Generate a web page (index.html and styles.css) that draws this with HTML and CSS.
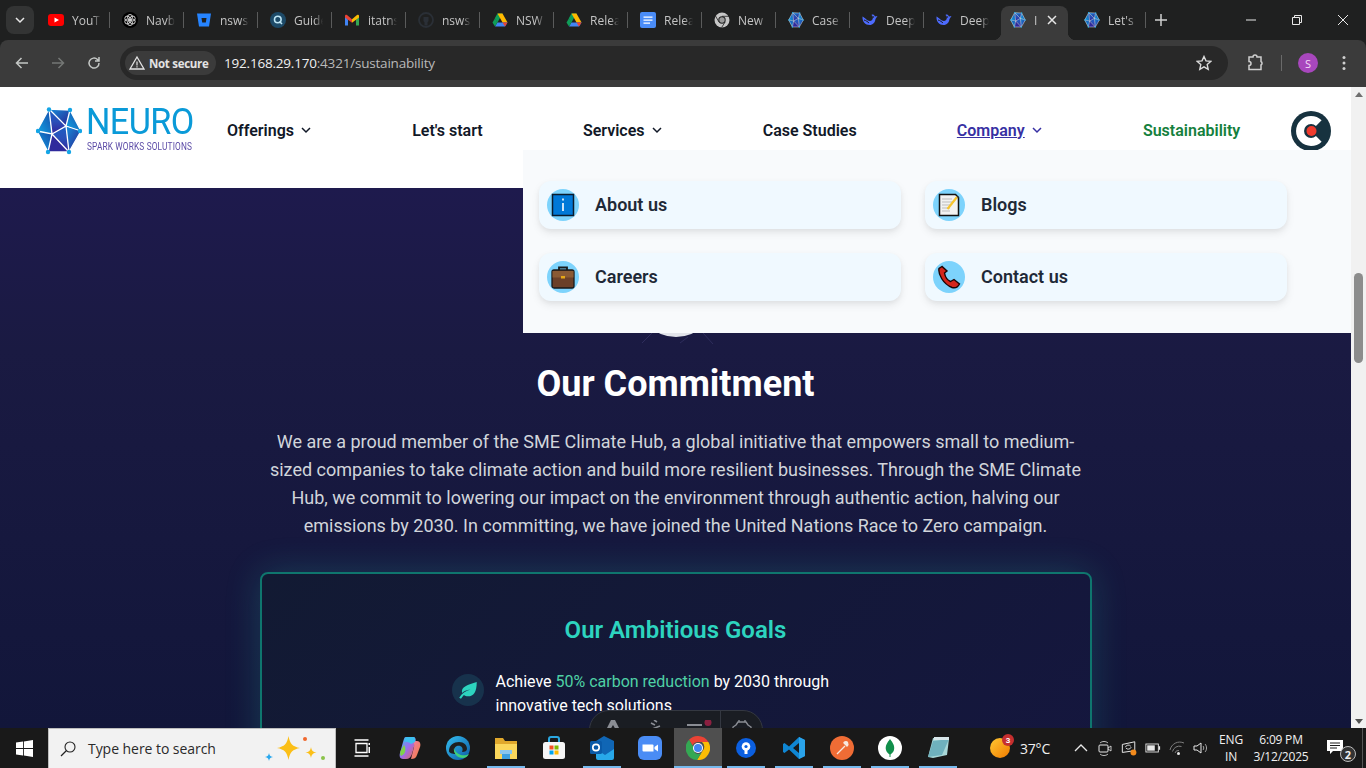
FILE: index.html
```html
<!DOCTYPE html>
<html lang="en">
<head>
<meta charset="utf-8">
<title>Sustainability</title>
<link rel="stylesheet" href="styles.css">
</head>
<body>
<svg class="defs" aria-hidden="true">
  <defs>
    <linearGradient id="ng" x1="0" y1="0" x2="0" y2="1"><stop offset="0" stop-color="#1c5fc4"/><stop offset=".5" stop-color="#2a4fb8"/><stop offset="1" stop-color="#33239a"/></linearGradient>
    <linearGradient id="ng2" x1="1" y1="0" x2="0" y2="1"><stop offset="0" stop-color="#1747a8"/><stop offset="1" stop-color="#10a6e6"/></linearGradient>
    <linearGradient id="ng3" x1="0" y1="0" x2="1" y2="1"><stop offset="0" stop-color="#1590dc"/><stop offset="1" stop-color="#2b1f8f"/></linearGradient>
    <linearGradient id="cop" x1="0" y1="0" x2="1" y2="1"><stop offset="0" stop-color="#37c3f0"/><stop offset=".5" stop-color="#9c6cf0"/><stop offset="1" stop-color="#f0663c"/></linearGradient>
    <linearGradient id="cop2" x1="0" y1="0" x2="1" y2="1"><stop offset="0" stop-color="#f07ab0"/><stop offset="1" stop-color="#f2803a"/></linearGradient>
    <linearGradient id="edge" x1="0" y1="0" x2="1" y2="1"><stop offset="0" stop-color="#35c1f1"/><stop offset="1" stop-color="#0c59a4"/></linearGradient>
    <symbol id="neuro" viewBox="0 0 46 48">
      <path fill="url(#ng2)" d="M13 2 16 27 1 24Z"/>
      <path fill="url(#ng3)" d="M13 2 34 3 30 19Z"/>
      <path fill="url(#ng)" d="M13 2 30 19 16 27Z"/>
      <path fill="url(#ng2)" d="M34 3 45 24 30 19Z"/>
      <path fill="url(#ng3)" d="M30 19 45 24 33 45Z"/>
      <path fill="url(#ng)" d="M16 27 30 19 33 45Z"/>
      <path fill="#2f2a9c" d="M16 27 33 45H12Z"/>
      <path fill="url(#ng2)" d="M1 24 16 27 12 45Z"/>
      <path fill="none" stroke="#fff" stroke-width="1.300" d="M13 2 34 3 45 24 33 45 12 45 1 24ZM13 2 16 27 1 24M16 27 12 45M16 27 33 45M16 27 30 19 13 2M30 19 34 3M30 19 45 24M30 19 33 45"/>
      <g fill="#14a5e6"><circle cx="13" cy="2.500" r="2.200"/><circle cx="34" cy="3" r="2.200"/><circle cx="44" cy="24" r="2.200"/><circle cx="33" cy="45" r="2.200"/><circle cx="12" cy="45" r="2.200"/><circle cx="2" cy="24" r="2.200"/></g>
    </symbol>
    <symbol id="fav-yt" viewBox="0 0 16 16"><rect y="2" width="16" height="12" rx="3" fill="#f00"/><path d="M6.500 5.500 11 8l-4.500 2.500Z" fill="#fff"/></symbol>
    <symbol id="fav-ai" viewBox="0 0 16 16"><circle cx="8" cy="8" r="8" fill="#000"/><g fill="none" stroke="#cfcfcf" stroke-width="1"><circle cx="8" cy="5" r="2.500"/><circle cx="8" cy="11" r="2.500"/><circle cx="5.300" cy="6.500" r="2.500"/><circle cx="10.700" cy="6.500" r="2.500"/><circle cx="5.300" cy="9.500" r="2.500"/><circle cx="10.700" cy="9.500" r="2.500"/></g></symbol>
    <symbol id="fav-bb" viewBox="0 0 16 16"><path d="M1 1.500h14l-2 13H3Z" fill="#2684ff"/><path d="M5.500 6h5l-.7 4.500H6.200Z" fill="#1f2020"/></symbol>
    <symbol id="fav-q" viewBox="0 0 16 16"><circle cx="8" cy="8" r="8" fill="#1d4a68"/><circle cx="7.800" cy="7.500" r="3.300" fill="none" stroke="#bfe6f5" stroke-width="1.600"/><path d="m9.500 9.500 2.500 2.500" stroke="#bfe6f5" stroke-width="1.600"/></symbol>
    <symbol id="fav-gm" viewBox="0 0 16 16"><path d="M1 4v9.500h3V7.500Z" fill="#4285f4"/><path d="M15 4v9.500h-3V7.500Z" fill="#34a853"/><path d="M1 3.500v2l7 5.300V7.300L3 3C2 2.300 1 2.700 1 3.500Z" fill="#ea4335"/><path d="M15 3.500v2l-7 5.300V7.300L13 3c1-.7 2-.3 2 .5Z" fill="#fbbc04"/></symbol>
    <symbol id="fav-gh" viewBox="0 0 16 16"><circle cx="8" cy="8" r="7" fill="none" stroke="#2a2f36" stroke-width="1.800"/><path d="M5.500 5h5v4l-1 1.500v3h-3v-3l-1-1.500Z" fill="#2a2f36"/></symbol>
    <symbol id="fav-dr" viewBox="0 0 16 16"><path d="M5.500 1.500h5L5.300 10.700 2.800 6.200Z" fill="#0f9d58"/><path d="M10.500 1.500 15.500 10.500h-5L5.500 1.500Z" fill="#ffba00"/><path d="M3 14.500 5.400 10.500h10.100L13 14.500Z" fill="#4285f4"/><path d="M.5 10.500 3 6.200l2.400 4.300L3 14.500Z" fill="#0f9d58"/><path d="M15.500 10.500 13 14.500l-2.500-4Z" fill="#ea4335"/></symbol>
    <symbol id="fav-doc" viewBox="0 0 16 16"><rect width="16" height="16" rx="2" fill="#4a8cf7"/><path d="M3.500 4.500h9v1.300h-9zM3.500 7.500h9v1.300h-9zM3.500 10.500h6.500v1.300H3.500z" fill="#fff"/></symbol>
    <symbol id="fav-chg" viewBox="0 0 16 16"><circle cx="8" cy="8" r="7.500" fill="#c7c7c7"/><circle cx="8" cy="8" r="3.700" fill="#1f2020"/><circle cx="8" cy="8" r="2.700" fill="#9a9a9a"/><path d="M8 4.300h7M5 10 1.500 4M11.200 9.900 7.600 15.500" stroke="#1f2020" stroke-width=".8"/></symbol>
    <symbol id="fav-ds" viewBox="0 0 16 16"><path d="M.5 4.500c-.5 5 3 8.500 7 8.500 3.500 0 5.500-2.500 6-6l2-3-2.500.5C12 2.500 10.500 2 9.500 3c2.500 1.500 1.500 6-1.500 6-3 0-5-3.500-7.500-4.500Z" fill="#4d6bfe"/><path d="M2 8c2 .5 4 2 5 3" stroke="#1f2020" fill="none"/><circle cx="11.500" cy="5" r=".7" fill="#1f2020"/></symbol>
    <symbol id="i-leaf" viewBox="0 0 16 16"><path d="M15 1.500c0 8-2.500 11.500-7 11.500-1.400 0-2.500-.4-3.300-1C3.700 13 3 14 2.400 15L1 14.200C3 10.500 6 8.500 10 7.500 7 7.800 4.500 9 3.300 10.300 2 5.500 8 3.500 15 1.500Z" fill="#2dd4bf"/></symbol>
    <symbol id="chev" viewBox="0 0 12 12"><path d="m2 4 4 4 4-4" fill="none" stroke="currentColor" stroke-width="1.500"/></symbol>
  </defs>
</svg>

<div class="screen">
  <header class="tabstrip">
    <button class="tabmenu"><svg class="ic12"><use href="#chev"/></svg></button>
    <div class="tabs">
      <div class="tab"><svg class="fav"><use href="#fav-yt"/></svg><span class="tabname">YouTube</span></div>
      <div class="tab"><svg class="fav"><use href="#fav-ai"/></svg><span class="tabname">Navbar</span></div>
      <div class="tab"><svg class="fav"><use href="#fav-bb"/></svg><span class="tabname">nsws-</span></div>
      <div class="tab"><svg class="fav"><use href="#fav-q"/></svg><span class="tabname">Guide</span></div>
      <div class="tab"><svg class="fav"><use href="#fav-gm"/></svg><span class="tabname">itatns</span></div>
      <div class="tab"><svg class="fav"><use href="#fav-gh"/></svg><span class="tabname">nsws</span></div>
      <div class="tab"><svg class="fav"><use href="#fav-dr"/></svg><span class="tabname">NSW</span></div>
      <div class="tab"><svg class="fav"><use href="#fav-dr"/></svg><span class="tabname">Release</span></div>
      <div class="tab"><svg class="fav"><use href="#fav-doc"/></svg><span class="tabname">Release</span></div>
      <div class="tab"><svg class="fav"><use href="#fav-chg"/></svg><span class="tabname">New</span></div>
      <div class="tab"><svg class="fav"><use href="#neuro"/></svg><span class="tabname">Case</span></div>
      <div class="tab"><svg class="fav"><use href="#fav-ds"/></svg><span class="tabname">Deep</span></div>
      <div class="tab tab-before-active"><svg class="fav"><use href="#fav-ds"/></svg><span class="tabname">Deep</span></div>
      <div class="tab tab-active"><svg class="fav"><use href="#neuro"/></svg><span class="tabname tabname-active">I</span>
        <svg class="tabclose" viewBox="0 0 10 10"><path d="m1 1 8 8M9 1 1 9" stroke="#e6e6e6" stroke-width="1.500"/></svg></div>
      <div class="tab"><svg class="fav"><use href="#neuro"/></svg><span class="tabname">Let's</span></div>
    </div>
    <svg class="newtab" viewBox="0 0 12 12"><path d="M6 0v12M0 6h12" stroke="#d0d0d0" stroke-width="1.500"/></svg>
    <div class="winctl">
      <svg class="winbtn" viewBox="0 0 12 12"><path d="M1 6h10" stroke="#e8e8e8"/></svg>
      <svg class="winbtn" viewBox="0 0 12 12"><path d="M1.500 3.500h7v7h-7zM3.500 3.500v-2h7v7h-2" fill="none" stroke="#e8e8e8"/></svg>
      <svg class="winbtn" viewBox="0 0 12 12"><path d="m1 1 10 10M11 1 1 11" stroke="#e8e8e8"/></svg>
    </div>
  </header>

  <nav class="toolbar">
    <svg class="tool" viewBox="0 0 16 16"><path d="M14 8H2.500M7.500 3l-5 5 5 5" fill="none" stroke="#c4c7c5" stroke-width="1.500"/></svg>
    <svg class="tool" viewBox="0 0 16 16"><path d="M2 8h11.500M8.500 3l5 5-5 5" fill="none" stroke="#747775" stroke-width="1.500"/></svg>
    <svg class="tool" viewBox="0 0 16 16"><path d="M13 8a5 5 0 1 1-1.500-3.500L13 6M13 2v4H9" fill="none" stroke="#c4c7c5" stroke-width="1.500"/></svg>
    <div class="omnibox">
      <div class="chip">
        <svg class="warn" viewBox="0 0 16 16"><path d="M8 2 15 14H1Z" fill="none" stroke="#e3e3e3" stroke-width="1.300"/><path d="M8 6.500v4M8 11.300v1.200" stroke="#e3e3e3" stroke-width="1.200"/></svg>
        <span>Not secure</span>
      </div>
      <span class="url"><span class="url-host">192.168.29.170</span>:4321/sustainability</span>
      <svg class="star" viewBox="0 0 16 16"><path d="m8 1.500 2 4.400 4.800.5-3.600 3.200 1 4.700L8 11.900l-4.200 2.400 1-4.700L1.200 6.400 6 5.900Z" fill="none" stroke="#dcdcdc" stroke-width="1.400"/></svg>
    </div>
    <svg class="ext" viewBox="0 0 18 18"><path d="M3 3h4a2 2 0 0 1 4 0h4v4.500a2 2 0 0 1 0 3.500v4.500H3v-4a2 2 0 0 0 0-4Z" fill="none" stroke="#d0d0d0" stroke-width="1.500"/></svg>
    <span class="tool-sep"></span>
    <span class="avatar">S</span>
    <svg class="kebab" viewBox="0 0 4 16"><circle cx="2" cy="2.500" r="1.500" fill="#d0d0d0"/><circle cx="2" cy="8" r="1.500" fill="#d0d0d0"/><circle cx="2" cy="13.500" r="1.500" fill="#d0d0d0"/></svg>
  </nav>

  <div class="viewport">
    <div class="page">
      <div class="site-header">
        <div class="logo">
          <svg class="logo-mark"><use href="#neuro"/></svg>
          <div class="logo-text">
            <span class="logo-name">NEURO</span>
            <span class="logo-sub">SPARK WORKS SOLUTIONS</span>
          </div>
        </div>
        <div class="site-nav">
          <a class="nav-link">Offerings <svg class="ic12"><use href="#chev"/></svg></a>
          <a class="nav-link">Let's start</a>
          <a class="nav-link">Services <svg class="ic12"><use href="#chev"/></svg></a>
          <a class="nav-link">Case Studies</a>
          <a class="nav-link nav-company"><span class="underlined">Company</span> <svg class="ic12"><use href="#chev"/></svg></a>
          <a class="nav-link nav-green">Sustainability</a>
        </div>
        <svg class="brand-c" viewBox="0 0 40 40">
          <circle cx="20" cy="20" r="20" fill="#17323f"/>
          <path d="M27.800 12.200A11 11 0 1 0 27.800 27.800" fill="none" stroke="#fff" stroke-width="8"/>
          <circle cx="20.500" cy="20" r="5" fill="#ef3b2d"/>
        </svg>
      </div>

      <main class="hero">
        <div class="hero-badge">
          <svg class="badge-rays" viewBox="0 0 120 16"><path d="M26 14 36 4M64 14l8-6M87 4l10 11" stroke="#2e2d5c" fill="none"/></svg>
        </div>
        <h1 class="hero-title">Our Commitment</h1>
        <p class="hero-copy">We are a proud member of the SME Climate Hub, a global initiative that empowers small to medium-sized companies to take climate action and build more resilient businesses. Through the SME Climate Hub, we commit to lowering our impact on the environment through authentic action, halving our emissions by 2030. In committing, we have joined the United Nations Race to Zero campaign.</p>
        <section class="goals">
          <h2 class="goals-title">Our Ambitious Goals</h2>
          <div class="goal">
            <span class="goal-icon"><svg class="leaf"><use href="#i-leaf"/></svg></span>
            <p class="goal-text">Achieve <span class="goal-hl">50% carbon reduction</span> by 2030 through innovative tech solutions</p>
          </div>
        </section>
      </main>

      <div class="dropdown">
        <a class="menu-card">
          <span class="menu-icon"><svg class="emoji" viewBox="0 0 24 24"><rect x="1.500" y="1.500" width="21" height="21" fill="#0078d7" stroke="#0b1b2b" stroke-width="1.500"/><path d="M12 5.500v2M12 10v8" stroke="#fff" stroke-width="1.600"/></svg></span>
          <span class="menu-label">About us</span>
        </a>
        <a class="menu-card">
          <span class="menu-icon"><svg class="emoji" viewBox="0 0 24 24"><path d="M8 5V2.500h8V5" fill="none" stroke="#1a1a1a" stroke-width="1.800"/><rect x="1" y="5" width="22" height="18" rx="2" fill="#6b4028" stroke="#1a1a1a" stroke-width="1.300"/><path d="M1.500 6h21v6.500h-21z" fill="#8a5a34"/><rect x="10" y="11" width="4" height="2.500" fill="#e6a817"/></svg></span>
          <span class="menu-label">Careers</span>
        </a>
        <a class="menu-card">
          <span class="menu-icon"><svg class="emoji" viewBox="0 0 24 24"><path d="M2.500 1.500h16l3 3v18h-19Z" fill="#f2f2f2" stroke="#111" stroke-width="1.500"/><path d="M5 6h10M5 9h12M5 12h8M5 15h8M5 18h8" stroke="#bdbdbd"/><path d="m20 4-9.500 12" stroke="#f7c52e" stroke-width="2.200"/><path d="m20 3 2 1-1 2Z" fill="#333"/></svg></span>
          <span class="menu-label">Blogs</span>
        </a>
        <a class="menu-card">
          <span class="menu-icon"><svg class="emoji" viewBox="0 0 24 24"><path d="M5 1.500 2 3.500C1 9 6 19 15 22.500c3 .8 6-.5 7.500-3.500L17 14.500l-3.500 2C10 15 8 11 7.500 8L10 6Z" fill="#d3261c" stroke="#1a0505" stroke-width="1.400"/></svg></span>
          <span class="menu-label">Contact us</span>
        </a>
      </div>

      <div class="devbar">
        <svg class="dev-a" viewBox="0 0 14 18"><path d="M0 10 5 0h4l5 10h-4L7 5 4 10Z" fill="#8a8d94"/></svg>
        <svg class="dev-b" viewBox="0 0 16 12"><path d="M8 0l3 2M5 3l4 2M1 11 14 6" stroke="#8a8d94" stroke-width="1.600" fill="none"/></svg>
        <svg class="dev-c" viewBox="0 0 26 12"><path d="M0 5h15" stroke="#8a8d94" stroke-width="2"/><circle cx="21" cy="2.500" r="3.500" fill="#8b2040"/></svg>
        <span class="dev-sep"></span>
        <svg class="dev-d" viewBox="0 0 20 12"><path d="M1 11V7l3-2 2-3h8l2 3 3 2v4M7 2V0M13 2V0" stroke="#8a8d94" stroke-width="1.400" fill="none"/></svg>
      </div>
    </div>

    <aside class="scrollbar">
      <span class="scroll-up"></span>
      <span class="scroll-thumb"></span>
      <span class="scroll-down"></span>
    </aside>
  </div>

  <footer class="taskbar">
    <div class="start">
      <svg class="winlogo" viewBox="0 0 16 16"><path d="M0 2.300 6.600 1.400V7.600H0ZM7.400 1.300 16 0V7.600H7.400ZM0 8.400H6.600V14.600L0 13.700ZM7.400 8.400H16V16L7.400 14.700Z" fill="#fff"/></svg>
    </div>
    <div class="search">
      <svg class="search-ic" viewBox="0 0 16 16"><circle cx="10" cy="6" r="5" fill="none" stroke="#222" stroke-width="1.100"/><path d="M6.500 9.500 1 15" stroke="#222" stroke-width="1.200"/></svg>
      <span class="search-text">Type here to search</span>
      <svg class="sparkles" viewBox="0 0 64 28"><path d="M25.500 1c1.500 8 4 10.500 11.500 12-7.500 1.500-10 4-11.500 12-1.500-8-4-10.500-11.500-12 7.500-1.500 10-4 11.500-12Z" fill="#fbbf17"/><path d="M48 12c.6 3.500 2 5 5.500 5.500-3.500.5-4.900 2-5.500 5.500-.6-3.500-2-5-5.500-5.500 3.500-.5 4.900-2 5.500-5.500Z" fill="#fbbf17"/><path d="M6 18c.4 2.500 1.300 3.500 4 4-2.700.5-3.600 1.500-4 4-.4-2.500-1.300-3.500-4-4 2.700-.5 3.600-1.500 4-4Z" fill="#2aa8ee"/><circle cx="42" cy="4" r="2" fill="#f0672e"/><circle cx="60" cy="23" r="2" fill="#8bc34a"/></svg>
    </div>
    <div class="apps">
      <span class="app"><svg class="app-ic" viewBox="0 0 24 24"><path d="M6 7.500h11v9H6zM4.500 4h14M4.500 20h14" fill="none" stroke="#fff" stroke-width="1.300"/><path d="M18.500 7h1.500v2h-1.500zM18.500 11h1.500v6h-1.500z" fill="#fff"/></svg></span>
      <span class="app"><svg class="app-ic" viewBox="0 0 24 24"><path d="M8 1h7c3 0 3 3 2 6l-3 11c-1 3-3 5-6 5H5c-3 0-4-3-3-6L5 6c1-3 1-5 3-5Z" fill="url(#cop)"/><path d="M14 5h5c3 0 4 3 3 6l-3 8c-1 3-3 4-6 4l3-12c.6-3-.5-6-2-6Z" fill="url(#cop2)"/><path d="M9 1h6c2 0 3 2 2 5L13 8C10 5 6 6 6 6c1-3 1-5 3-5Z" fill="#3cc0f0"/><path d="M2.500 15 6 9c2 3 2 6 0 9l-3 2c-1-1-1-3-.5-5Z" fill="#7fd34a"/></svg></span>
      <span class="app"><svg class="app-ic" viewBox="0 0 24 24"><circle cx="12" cy="12" r="12" fill="url(#edge)"/><path d="M3 15c0-6 5-9 10-9 5 0 8 3 8 7 0 2-2 3-5 3 2-4-1-7-5-6-3 1-4 5-1 8-4 0-7-1-7-3Z" fill="#1f2020"/><path d="M8 12c-1 5 3 10 9 10 2 0 4-1 6-4-5 3-13 1-15-6Z" fill="#3ed07a"/></svg></span>
      <span class="app app-open"><svg class="app-ic" viewBox="0 0 24 24"><path d="M1 2h8l2 3h12v6H1Z" fill="#e0a82c"/><path d="M1 8h22v15H1Z" fill="#fbd75b"/><path d="M8 16h8v7H8Z" fill="#3ea0e0"/><path d="M6 14h12v4H6Z" fill="#8ac6ee"/></svg></span>
      <span class="app"><svg class="app-ic" viewBox="0 0 24 24"><path d="M7 6V3a2 2 0 0 1 2-2h6a2 2 0 0 1 2 2v3" fill="none" stroke="#2aa7e0" stroke-width="2"/><rect x="1" y="6" width="22" height="17" rx="2.500" fill="#f6f6f6"/><path d="M7.500 9.500h4v4h-4z" fill="#f25022"/><path d="M12.500 9.500h4v4h-4z" fill="#7fba00"/><path d="M7.500 14.500h4v4h-4z" fill="#00a4ef"/><path d="M12.500 14.500h4v4h-4z" fill="#ffb900"/></svg></span>
      <span class="app app-open"><svg class="app-ic" viewBox="0 0 24 24"><path d="M6 5 14 0l10 5v14H6Z" fill="#1066b5"/><path d="M6 13l9 6 9-6v9a2 2 0 0 1-2 2H8a2 2 0 0 1-2-2Z" fill="#28a8ea"/><rect y="5" width="12" height="13" rx="1.500" fill="#0a5aa8"/><circle cx="6" cy="11.500" r="3.200" fill="none" stroke="#fff" stroke-width="1.700"/></svg></span>
      <span class="app"><svg class="app-ic" viewBox="0 0 24 24"><rect width="24" height="24" rx="6" fill="#4a8cf5"/><path d="M4.500 8.500h10a1 1 0 0 1 1 1v6h-10a1 1 0 0 1-1-1Z" fill="#fff"/><path d="m16.500 11 3.500-2.500v7L16.500 13Z" fill="#fff"/></svg></span>
      <span class="app app-active"><svg class="app-ic" viewBox="0 0 24 24"><path d="M12 0a12 12 0 0 1 10.400 6H12a6 6 0 0 0-5.500 3.500L3 3.800A12 12 0 0 1 12 0Z" fill="#ea4335"/><path d="M22.400 6A12 12 0 0 1 11 24l5.500-9a6 6 0 0 0-.5-9Z" fill="#fbbc04"/><path d="M3 3.800 8 12a4.500 4.500 0 0 0 8.500 3L11 24A12 12 0 0 1 3 3.800Z" fill="#34a853"/><circle cx="12" cy="12" r="5" fill="#fff"/><circle cx="12" cy="12" r="4" fill="#4285f4"/></svg></span>
      <span class="app app-open"><svg class="app-ic" viewBox="0 0 24 24"><circle cx="12" cy="12" r="10" fill="#0b5fe0"/><circle cx="12" cy="10.500" r="4.300" fill="#fff"/><path d="M10.500 13h3v5h-3z" fill="#fff"/><circle cx="12" cy="10.500" r="1.600" fill="#0b5fe0"/></svg></span>
      <span class="app app-open"><svg class="app-ic" viewBox="0 0 24 24"><path d="m17 1 6 3v16l-6 3L7 13.500 2.500 17 1 16V8l1.500-1L7 10.500Zm0 6-6 5 6 5Z" fill="#0f86d3"/><path d="m17 1 6 3v16l-6 3Z" fill="#2aa3ea"/></svg></span>
      <span class="app app-open"><svg class="app-ic" viewBox="0 0 24 24"><circle cx="12" cy="12" r="12" fill="#ef6c35"/><path d="m7 18 8-8M14 6.500c1-1 3-1 3.500 0s.5 2.500-.5 3.500L14 7Z" stroke="#f7e8df" stroke-width="1.300" fill="#f7e8df"/></svg></span>
      <span class="app app-open"><svg class="app-ic" viewBox="0 0 24 24"><circle cx="12" cy="12" r="12" fill="#fff"/><path d="M12 3c3 4 5 7 4 11-.5 2.500-2.500 3.500-3.500 4.500V21h-1v-2.500C10.500 17.500 8.500 16.500 8 14 7 10 9 7 12 3Z" fill="#118f4b"/></svg></span>
      <span class="app app-open"><svg class="app-ic" viewBox="0 0 24 24"><path d="M7 2 23 3l-2 16-14 3-5-1Z" fill="#a9d8d8"/><path d="M7 5 2 21l14-2L23 3Z" fill="#6fb1bd"/><path d="M8 1h15v3H8Z" fill="#d8e6ea"/></svg></span>
    </div>
    <div class="weather">
      <span class="sun"><span class="sun-badge">3</span></span>
      <span class="temp">37°C</span>
    </div>
    <div class="tray">
      <span class="tray-slot"><svg class="tray-ic" viewBox="0 0 16 16"><path d="m2 11 6-6 6 6" fill="none" stroke="#e8e8e8" stroke-width="1.300"/></svg></span>
      <span class="tray-slot"><svg class="tray-ic" viewBox="0 0 16 16"><rect x="2" y="5" width="9" height="7" rx="1" fill="none" stroke="#e8e8e8"/><path d="m11 8 3-2v5l-3-2M3 3c2-2 6-2 8 0M3 14c2 2 6 2 8 0" fill="none" stroke="#e8e8e8" stroke-width=".8"/></svg></span>
      <span class="tray-slot"><svg class="tray-ic" viewBox="0 0 18 18"><path d="M1.500 5 15.500 2v10l-14 2Z" fill="none" stroke="#e8e8e8" stroke-width="1.100"/><path d="M5 8a3.500 3.500 0 0 1 6-1M11.500 8a3.500 3.500 0 0 1-6 1" fill="none" stroke="#e8e8e8"/><circle cx="14" cy="14" r="3.300" fill="#f28a1c"/></svg></span>
      <span class="tray-slot"><svg class="tray-ic" viewBox="0 0 18 16"><rect x="1" y="3.500" width="14" height="9" fill="none" stroke="#e8e8e8"/><rect x="2.500" y="5" width="8.500" height="6" fill="#e8e8e8"/><rect x="15.500" y="6" width="1.500" height="4" fill="#e8e8e8"/></svg></span>
      <span class="tray-slot"><svg class="tray-ic" viewBox="0 0 16 16"><path d="M1 10a10 10 0 0 1 14-7M3.500 11.500a7 7 0 0 1 9-5M6 13a3.500 3.500 0 0 1 4-2.500" fill="none" stroke="#7d7d7d"/><circle cx="9.500" cy="13.500" r="1.500" fill="#e8e8e8"/></svg></span>
      <span class="tray-slot"><svg class="tray-ic" viewBox="0 0 16 16"><path d="M1 6v4h3l4 3V3L4 6Z" fill="none" stroke="#e8e8e8"/><path d="M10 6c1 1 1 3 0 4M12 4c2 2 2 6 0 8" fill="none" stroke="#a8a8a8"/></svg></span>
    </div>
    <div class="lang"><span>ENG</span><span>IN</span></div>
    <div class="clock"><span>6:09 PM</span><span>3/12/2025</span></div>
    <div class="notify">
      <svg class="notify-ic" viewBox="0 0 18 16"><path d="M1 1h16v11H7l-3 3v-3H1Z" fill="#fff"/><path d="M4 4h10M4 6.500h10M4 9h7" stroke="#1a1a1a"/></svg>
      <span class="notify-count">2</span>
    </div>
    <span class="show-desktop"></span>
  </footer>
</div>
</body>
</html>
```
FILE: styles.css
```css
* { box-sizing: border-box; }
html, body { margin: 0; height: 100%; overflow: hidden; }
body { font-family: Roboto, "Liberation Sans", sans-serif; background: #1f2020; }
.defs { width: 0; height: 0; display: block; position: absolute; }
.screen { width: 1366px; height: 768px; display: flex; flex-direction: column; overflow: hidden; }
.ic12 { width: 12px; height: 12px; display: inline-block; }

/* tab strip */
.tabstrip { height: 40px; flex: none; display: flex; align-items: flex-start; background: #1f2020; color: #c7c7c7; position: relative; }
.tabmenu { width: 28px; height: 28px; margin: 6px 2px 0 6px; padding: 0; border: 0; border-radius: 8px; background: #333434; color: #e8e8e8; display: flex; align-items: center; justify-content: center; }
.tabs { display: flex; }
.tab { width: 74px; height: 34px; margin-top: 6px; padding: 0 0 6px 12px; display: flex; align-items: center; gap: 8px; position: relative; flex: none; }
.tab::after { content: ""; position: absolute; right: 0; top: 6px; height: 16px; width: 1px; background: #5a5b5b; }
.tab-before-active::after { display: none; }
.fav { width: 16px; height: 16px; flex: none; }
.tabname { font-family: "Open Sans", "Noto Sans", sans-serif; font-size: 12px; color: #c4c4c4; width: 29px; white-space: nowrap; overflow: hidden; -webkit-mask-image: linear-gradient(90deg, #000 70%, transparent); mask-image: linear-gradient(90deg, #000 70%, transparent); }
.tab-active { background: #3b3b3b; border-radius: 8px 8px 0 0; width: 67px; margin-left: 3px; margin-right: 4px; padding-left: 9px; }
.tab-active::before, .tab-active::after { content: ""; position: absolute; top: auto; bottom: 0; width: 8px; height: 8px; }
.tab-active::before { left: -8px; background: radial-gradient(circle at 0 0, transparent 8px, #3b3b3b 8.500px); }
.tab-active::after { right: -8px; background: radial-gradient(circle at 100% 0, transparent 8px, #3b3b3b 8.500px); }
.tabname-active { width: 10px; }
.tabclose { width: 10px; height: 10px; position: absolute; right: 11px; top: 9px; }
.newtab { width: 12px; height: 12px; margin: 14px 0 0 9px; flex: none; }
.winctl { margin-left: auto; display: flex; gap: 34px; padding: 14px 17px 0 0; }
.winbtn { width: 12px; height: 12px; }

/* browser toolbar */
.toolbar { height: 47px; flex: none; background: #3b3b3b; display: flex; align-items: center; padding: 0 14px 1px; border-radius: 8px 8px 0 0; position: relative; }
.tool { width: 16px; height: 16px; margin-right: 20px; flex: none; }
.omnibox { width: 1108px; height: 34px; margin-left: -2px; border-radius: 17px; background: #282828; display: flex; align-items: center; padding: 0 16px 0 5px; }
.chip { width: 91px; height: 24px; border-radius: 12px; background: #3b3b3b; display: flex; align-items: center; gap: 4px; padding-left: 4px; font-family: "Open Sans", "Noto Sans", sans-serif; font-size: 11.500px; font-weight: 700; color: #e3e3e3; white-space: nowrap; letter-spacing: -.3px; }
.warn { width: 16px; height: 16px; flex: none; }
.url { margin-left: 8px; font-family: "Open Sans", "Noto Sans", sans-serif; font-size: 13.500px; color: #b9b9b9; letter-spacing: -.2px; }
.url-host { color: #f0f0f0; }
.star { width: 16px; height: 16px; margin-left: auto; }
.ext { width: 18px; height: 18px; margin-left: 18px; flex: none; }
.tool-sep { width: 1px; height: 16px; background: #6a6a6a; margin-left: 17px; flex: none; }
.avatar { width: 20px; height: 20px; margin-left: 16px; border-radius: 50%; background: #a847bd; color: #f4dcf8; font-size: 11px; display: flex; align-items: center; justify-content: center; flex: none; font-family: "Open Sans", sans-serif; }
.kebab { width: 4px; height: 16px; margin-left: 24px; flex: none; }

/* viewport */
.viewport { flex: 1; min-height: 0; display: flex; overflow: hidden; }
.page { flex: 1; min-width: 0; position: relative; overflow: hidden; display: flex; flex-direction: column; }
.scrollbar { width: 15px; flex: none; background: #f1f1f1; display: flex; flex-direction: column; align-items: center; padding-top: 5px; }
.scroll-up, .scroll-down { width: 0; height: 0; border-left: 4.500px solid transparent; border-right: 4.500px solid transparent; }
.scroll-up { border-bottom: 5px solid #6f6f6f; }
.scroll-down { border-top: 5px solid #505050; margin-top: auto; margin-bottom: 4px; }
.scroll-thumb { width: 9px; height: 90px; margin-top: 176px; background: #8c8c8c; border-radius: 5px; }

/* site header */
.site-header { height: 101px; flex: none; background: #fff; display: flex; align-items: flex-start; padding-left: 36px; }
.logo { display: flex; width: 158px; margin-top: 20px; gap: 5px; flex: none; }
.logo-mark { width: 46px; height: 48px; flex: none; }
.logo-text { display: flex; flex-direction: column; width: 107px; }
.logo-name { font-family: Roboto, sans-serif; font-weight: 400; font-size: 36px; line-height: 30px; color: #0a9ad8; letter-spacing: -.6px; transform: scaleX(.95); transform-origin: left; white-space: nowrap; margin-left: -1px; }
.logo-sub { font-size: 10.500px; line-height: 12px; margin-top: 4px; color: #5b4aa6; white-space: nowrap; transform: scaleX(.79); transform-origin: left; letter-spacing: .2px; }
.site-nav { display: flex; gap: 100.200px; margin-left: 33px; margin-top: 31px; height: 24px; align-items: center; flex: none; }
.nav-link { font-size: 16px; font-weight: 600; color: #111827; display: flex; align-items: center; gap: 6px; white-space: nowrap; }
.nav-company { color: #3730a3; }
.underlined { text-decoration: underline; }
.nav-green { color: #15803d; }
.brand-c { width: 40px; height: 40px; margin: 24px 0 0 50.500px; flex: none; }

/* dark section */
.hero { flex: 1; min-height: 0; padding-top: 69px; display: flex; flex-direction: column; align-items: center; background: linear-gradient(180deg, #1e1a4d 0%, #1a1a42 30%, #12163a 100%); }
.hero-badge { width: 80px; height: 80px; flex: none; border-radius: 50%; background: #e2e4ea; position: relative; }
.badge-rays { position: absolute; left: -20px; top: 72px; width: 120px; height: 16px; overflow: visible; }
.hero-title { margin: 27px 0 0; font-size: 36px; line-height: 40px; font-weight: 700; color: #fff; }
.hero-copy { margin: 24px 0 0; width: 832px; font-size: 18px; line-height: 28px; text-align: center; color: #d1d5db; }
.goals { width: 832px; margin-top: 32px; flex: none; border: 2px solid #0f766e; border-radius: 8px; background: linear-gradient(135deg, #121a33, #15163f); box-shadow: 0 0 36px rgba(45, 212, 191, .2); padding-top: 40px; height: 300px; }
.goals-title { margin: 0; font-size: 24px; line-height: 32px; font-weight: 600; text-align: center; color: #2dd4bf; }
.goal { width: 448px; margin: 24px auto 0; display: flex; gap: 12px; }
.goal-icon { width: 32px; height: 32px; margin-top: 4px; border-radius: 50%; background: #17324c; display: flex; align-items: center; justify-content: center; flex: none; }
.leaf { width: 20px; height: 20px; }
.goal-text { margin: 0; font-size: 16px; line-height: 24px; font-weight: 400; color: #fff; }
.goal-hl { color: #4fd1a5; font-weight: 400; }

/* overlays */
.dropdown { position: absolute; left: 523px; top: 62.500px; width: 828px; height: 183.500px; padding: 31.500px 16px; background: #f8fafc; display: grid; grid-template-columns: 362px 362px; grid-auto-flow: column; grid-template-rows: 48px 48px; gap: 24px; }
.menu-card { background: #f0f9ff; border-radius: 12px; padding: 0 8px; display: flex; align-items: center; gap: 16px; font-size: 18px; font-weight: 600; color: #1f2937; box-shadow: 0 4px 8px rgba(0, 0, 0, .08), 0 2px 4px rgba(0, 0, 0, .04); }
.menu-label { margin-bottom: 2px; }
.menu-icon { width: 32px; height: 32px; border-radius: 50%; background: #7dd3fc; display: flex; align-items: center; justify-content: center; flex: none; }
.emoji { width: 24px; height: 24px; }
.devbar { position: absolute; left: 589px; top: 623px; width: 174px; height: 40px; background: #1a1d23; border: 1px solid #343841; border-radius: 20px; display: flex; align-items: flex-start; padding: 9px 0 0 16px; }
.dev-a { width: 14px; height: 18px; flex: none; }
.dev-b { width: 16px; height: 12px; margin-left: 26px; flex: none; }
.dev-c { width: 26px; height: 12px; margin-left: 25px; flex: none; }
.dev-sep { width: 1px; height: 40px; margin: -9px 11px 0 7px; background: #343841; flex: none; }
.dev-d { width: 20px; height: 12px; flex: none; }

/* taskbar */
.taskbar { height: 40px; flex: none; background: #191919; display: flex; align-items: stretch; color: #f0f0f0; position: relative; }
.start { width: 48px; flex: none; display: flex; align-items: center; justify-content: center; }
.winlogo { width: 17px; height: 17px; }
.search { width: 288px; flex: none; background: #f2f2f2; border: 1px solid #bdbdbd; border-bottom: 0; display: flex; align-items: center; padding-left: 11px; }
.search-ic { width: 16px; height: 16px; flex: none; }
.search-text { margin-left: 12px; font-family: "Open Sans", "Noto Sans", sans-serif; font-size: 14px; letter-spacing: -.05px; color: #2a2a2a; white-space: nowrap; }
.sparkles { width: 64px; height: 28px; margin-left: auto; margin-right: 8px; flex: none; }
.apps { display: flex; margin-left: 2px; }
.app { width: 48px; display: flex; align-items: center; justify-content: center; position: relative; flex: none; }
.app-ic { width: 24px; height: 24px; }
.app-open::after, .app-active::after { content: ""; position: absolute; bottom: 0; left: 5px; right: 5px; height: 2px; background: #76b9ed; }
.app-active { background: #4f4f4f; }
.app-active::after { left: 0; right: 0; }
.weather { width: 79px; margin-left: 28px; display: flex; align-items: center; gap: 10px; flex: none; }
.sun { width: 20px; height: 20px; border-radius: 50%; background: linear-gradient(135deg, #ffc933, #f07a00); position: relative; flex: none; }
.sun-badge { position: absolute; right: -4px; top: -4px; width: 12px; height: 12px; border-radius: 50%; background: #c62f2f; color: #fff; font-size: 8px; font-weight: 700; display: flex; align-items: center; justify-content: center; }
.temp { font-family: "Open Sans", sans-serif; font-size: 14px; letter-spacing: -.2px; }
.tray { display: flex; flex: none; }
.tray-slot { width: 24px; display: flex; align-items: center; justify-content: center; }
.tray-ic { width: 16px; height: 16px; }
.lang, .clock { display: flex; flex-direction: column; align-items: center; justify-content: center; font-family: "Open Sans", sans-serif; font-size: 12px; line-height: 17px; flex: none; letter-spacing: -.2px; }
.lang { width: 36px; }
.clock { width: 64px; }
.notify { width: 48px; flex: none; position: relative; display: flex; align-items: center; justify-content: center; }
.notify-ic { width: 18px; height: 16px; margin-right: 4px; margin-top: -3px; }
.notify-count { position: absolute; left: 27px; top: 18px; width: 16px; height: 16px; border: 1px solid #bdbdbd; background: #333; border-radius: 50%; font-size: 11px; font-weight: 700; font-family: "Open Sans", sans-serif; display: flex; align-items: center; justify-content: center; }
.show-desktop { width: 1px; background: #555; margin-left: 1px; flex: none; }
```
